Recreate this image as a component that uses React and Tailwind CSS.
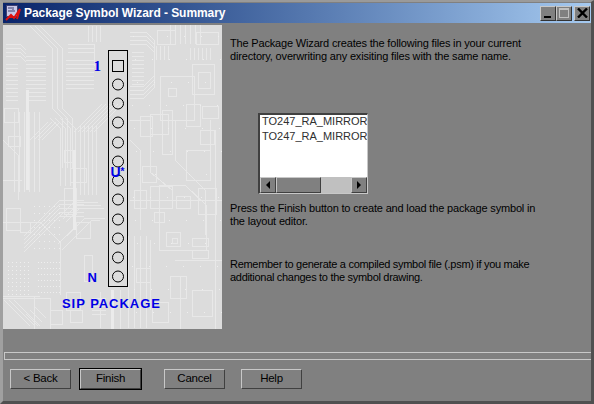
import React from 'react';

const pinRows = [84, 103, 122, 142, 161, 180, 199, 219, 238, 257, 276];

// parallel copper runs: start point, list of [dx, dy] steps, count, pitch
const buses = [
  { x: 6, y: 44, steps: [[14, 0], [6, 6]], n: 4, px: 0, py: 4 },
  { x: 6, y: 64, steps: [[12, 0]], n: 10, px: 0, py: 4 },
  { x: 30, y: 26, steps: [[22, 22], [0, 60], [10, 10], [0, 50]], n: 3, px: 5, py: 0 },
  { x: 26, y: 56, steps: [[20, 0]], n: 12, px: 0, py: 4 },
  { x: 68, y: 44, steps: [[26, 0], [0, 14]], n: 3, px: 0, py: 4 },
  { x: 66, y: 60, steps: [[28, 0]], n: 8, px: 0, py: 4 },
  { x: 74, y: 132, steps: [[28, -28]], n: 6, px: 4, py: 0 },
  { x: 30, y: 140, steps: [[18, -18]], n: 4, px: 4, py: 0 },
  { x: 80, y: 125, steps: [[0, 70]], n: 5, px: 4, py: 0 },
  { x: 14, y: 112, steps: [[0, 80]], n: 6, px: 5, py: 0 },
  { x: 50, y: 118, steps: [[10, 10], [0, 58]], n: 4, px: 5, py: 0 },
  { x: 24, y: 236, steps: [[36, -36], [24, 0]], n: 5, px: 0, py: 4 },
  { x: 60, y: 216, steps: [[14, -14], [24, 0]], n: 3, px: 3, py: 3 },
  { x: 130, y: 32, steps: [[16, 0], [8, 8], [0, 36], [-10, 10], [-14, 0]], n: 4, px: 0, py: 4 },
  { x: 132, y: 52, steps: [[12, 0]], n: 9, px: 0, py: 4 },
  { x: 128, y: 236, steps: [[0, 92]], n: 4, px: 6, py: 0 },
  { x: 88, y: 26, steps: [[0, 16]], n: 4, px: 4, py: 0 },
  { x: 170, y: 24, steps: [[0, 20]], n: 7, px: 5, py: 0 },
  { x: 156, y: 46, steps: [[0, 14]], n: 4, px: 4, py: 0 },
  { x: 190, y: 48, steps: [[0, 12]], n: 6, px: 4, py: 0 },
  { x: 92, y: 298, steps: [[14, 0]], n: 5, px: 0, py: 4 },
  { x: 26, y: 314, steps: [[12, 12]], n: 3, px: 4, py: -4 },
  { x: 4, y: 300, steps: [[26, 26]], n: 3, px: 5, py: 0 },
];

// outlines of the chips and pads on the board
const boxes = [
  [160, 76, 34, 44], [168, 88, 8, 8], [192, 64, 22, 30], [198, 72, 12, 16], [157, 30, 18, 14],
  [196, 32, 22, 12], [150, 114, 18, 20], [162, 110, 10, 44], [140, 116, 12, 20], [186, 104, 14, 22],
  [202, 106, 16, 12], [166, 232, 14, 14], [172, 238, 5, 5], [150, 186, 22, 22], [198, 188, 18, 26],
  [136, 268, 14, 14], [170, 276, 16, 22], [192, 290, 20, 26], [4, 108, 14, 14], [70, 168, 16, 14],
  [64, 188, 12, 26], [76, 222, 14, 16], [66, 292, 14, 18], [50, 310, 12, 14], [84, 255, 8, 26],
  [6, 208, 14, 22], [152, 302, 16, 20], [186, 150, 24, 30], [142, 166, 14, 16], [70, 310, 12, 12],
  [134, 190, 12, 18], [176, 196, 14, 12], [154, 212, 10, 10], [192, 238, 16, 8], [192, 250, 16, 8],
  [20, 222, 10, 10], [64, 150, 10, 12], [8, 136, 12, 10], [200, 130, 14, 14],
];

const wires = [
  'M159 190 L159 250 L206 250 L206 205 L185 185 L159 185 Z',
  'M130 120 L150 120 L150 172 L172 190',
  'M175 120 L175 160 L205 190 L205 235',
  'M3 222 L40 222 L60 242 L60 295',
  'M40 296 L3 296',
  'M34 296 L34 329',
  'M120 290 L120 329',
  'M62 250 L92 220 L100 220',
  'M3 140 L18 155 L18 200',
  'M130 200 L222 200',
  'M210 120 L210 180',
  'M150 240 L150 310',
  'M100 292 L100 328',
  'M175 260 L222 260',
  'M3 180 L22 180',
  'M58 244 L85 218 L105 218',
  'M3 298 L50 298 L50 329',
  'M130 140 L140 150 L140 230',
  'M180 276 L180 329',
  'M215 130 L215 329',
];

// via holes: grids on the lower left, sparse dots elsewhere
const vias = [];
for (let y = 262; y < 296; y += 4) {
  for (let x = 8; x < 32; x += 4) vias.push([x, y]);
}
for (let y = 262; y < 296; y += 6) {
  for (let x = 38; x < 60; x += 3) vias.push([x, y]);
}
for (let y = 206; y < 250; y += 7) {
  for (let x = 34; x < 60; x += 5) vias.push([x, y]);
}
for (let y = 36; y < 325; y += 23) {
  for (let x = 132; x < 222; x += 17) vias.push([x + (y % 7), y]);
}

function busPath(b) {
  let d = '';
  for (let i = 0; i < b.n; i++) {
    let x = b.x + i * b.px;
    let y = b.y + i * b.py;
    d += `M${x} ${y}`;
    b.steps.forEach(([dx, dy]) => {
      x += dx;
      y += dy;
      d += ` L${x} ${y}`;
    });
  }
  return d;
}

function SymbolArt() {
  const blue = '#0000e6';
  return (
    <svg width="219" height="304" viewBox="3 25 219 304" className="block shrink-0">
      <rect x="3" y="25" width="219" height="304" fill="#dcdcdc" />
      <g fill="none" stroke="#e8e8e8" strokeWidth="1" shapeRendering="crispEdges">
        {buses.map((b, i) => (
          <path key={i} d={busPath(b)} />
        ))}
        {boxes.map(([x, y, w, h], i) => (
          <rect key={i} x={x} y={y} width={w} height={h} />
        ))}
        {wires.map((d, i) => (
          <path key={i} d={d} />
        ))}
        <path d="M27 90 L27 190 M74 150 L74 230 M112 290 L112 329" stroke="#ebebeb" strokeWidth="3" />
      </g>
      <g fill="#efefef">
        {vias.map(([x, y], i) => (
          <rect key={i} x={x} y={y} width="1" height="1" />
        ))}
      </g>
      <rect x="108.5" y="50.5" width="19" height="236" fill="none" stroke="#000" />
      <rect x="112.5" y="60.5" width="11" height="11" fill="none" stroke="#000" />
      {pinRows.map((y) => (
        <circle key={y} cx="118" cy={y + 0.5} r="5.5" fill="none" stroke="#000" />
      ))}
      <text x="93.5" y="71" fill={blue} fontFamily="Liberation Serif, serif" fontWeight="700" fontSize="15">1</text>
      <text x="110.5" y="177" fill={blue} fontFamily="Liberation Sans, sans-serif" fontWeight="700" fontSize="14">U</text>
      <text x="120.5" y="175" fill={blue} fontFamily="Liberation Sans, sans-serif" fontWeight="700" fontSize="10">*</text>
      <text x="87.5" y="282" fill={blue} fontFamily="Liberation Sans, sans-serif" fontWeight="700" fontSize="13">N</text>
      <text x="62" y="308" fill={blue} fontFamily="Liberation Sans, sans-serif" fontWeight="700" fontSize="13" letterSpacing="0.95">SIP PACKAGE</text>
    </svg>
  );
}

function TitleButton({ children, className = '' }) {
  return (
    <div className={`w-4 h-[15px] bg-[#808080] border-t border-l border-r border-b border-t-[#c8c8c8] border-l-[#c8c8c8] border-r-[#333] border-b-[#333] flex items-center justify-center ${className}`}>
      {children}
    </div>
  );
}

function WizButton({ children, def }) {
  return (
    <div className={def ? 'border border-black' : 'border border-transparent'}>
      <div className="w-[61px] h-[20px] bg-[#808080] border-t border-l border-r border-b border-t-[#c8c8c8] border-l-[#c8c8c8] border-r-[#404040] border-b-[#404040] flex items-center justify-center text-[11.5px] tracking-[-0.25px] text-black leading-none">
        {children}
      </div>
    </div>
  );
}

export default function App() {
  return (
    <div className="w-[594px] h-[404px] bg-[#808080] flex flex-col border-t-2 border-l-[3px] border-r-[3px] border-b-[3px] border-t-[#9a9a9a] border-l-[#a0a0a0] border-r-[#505050] border-b-[#505050] font-['Liberation_Sans',sans-serif] overflow-hidden">
      <div className="h-[20px] mt-[1px] shrink-0 bg-gradient-to-r from-[#0a246a] to-[#a6caf0] flex items-center pl-[2px] pr-[1px]">
        <svg width="16" height="16" viewBox="0 0 16 16" className="shrink-0">
          <rect x="1.5" y="0.5" width="11" height="11" fill="#c8c8e8" stroke="#404070" />
          <path d="M3 3h4M3 6h7M8 2v3" stroke="#404070" fill="none" />
          <path d="M1 15 L6 10 L9 13 L15 4 L12 14 M3 12h8" stroke="#e01010" strokeWidth="2" fill="none" />
        </svg>
        <span className="ml-[3px] text-white font-bold text-[12px] tracking-[-0.06px] whitespace-nowrap">
          Package Symbol Wizard - Summary
        </span>
        <div className="ml-auto flex items-center">
          <TitleButton>
            <div className="w-[7px] h-[2px] bg-black mt-[7px] mr-[1px]" />
          </TitleButton>
          <TitleButton className="mr-[2px]">
            <div className="w-[10px] h-[10px] border border-[#c0c0c0] border-t-2" />
          </TitleButton>
          <TitleButton>
            <svg width="11" height="10" viewBox="0 0 11 10">
              <path d="M1 0.5 L10 9.5 M10 0.5 L1 9.5" stroke="#000" strokeWidth="2.4" fill="none" />
            </svg>
          </TitleButton>
        </div>
      </div>
      <div className="flex h-[304px] mt-[2px] shrink-0">
        <SymbolArt />
        <div className="pl-[8px] pt-[12px] w-[360px] text-[11px] tracking-[-0.17px] leading-[13px] text-black">
          <p className="whitespace-pre-line">
            {'The Package Wizard creates the following files in your current\ndirectory, overwriting any exisiting files with the same name.'}
          </p>
          <div className="ml-[28px] mt-[50px] w-[110px] h-[81px] bg-white border-t-2 border-l-2 border-b border-r border-t-[#404040] border-l-[#404040] border-b-[#c8c8c8] border-r-[#c8c8c8] flex flex-col overflow-hidden">
            <div className="flex-1 pl-[2px] -mt-[1px] text-[11px] tracking-[0] leading-[15px] text-[#303030] whitespace-nowrap overflow-hidden">
              <div>TO247_RA_MIRROR</div>
              <div>TO247_RA_MIRROR</div>
            </div>
            <div className="h-[16px] flex bg-[#c0c0c0]">
              <div className="w-4 bg-[#808080] border border-t-[#c8c8c8] border-l-[#c8c8c8] border-r-[#404040] border-b-[#404040] flex items-center justify-center">
                <div className="w-0 h-0 border-y-[4px] border-y-transparent border-r-[4px] border-r-black" />
              </div>
              <div className="w-[45px] bg-[#808080] border border-t-[#c8c8c8] border-l-[#c8c8c8] border-r-[#404040] border-b-[#404040]" />
              <div className="flex-1" />
              <div className="w-4 bg-[#808080] border border-t-[#c8c8c8] border-l-[#c8c8c8] border-r-[#404040] border-b-[#404040] flex items-center justify-center">
                <div className="w-0 h-0 border-y-[4px] border-y-transparent border-l-[4px] border-l-black" />
              </div>
            </div>
          </div>
          <p className="mt-[8px] whitespace-pre-line">
            {'Press the Finish button to create and load the package symbol in\nthe layout editor.'}
          </p>
          <p className="mt-[30px] whitespace-pre-line tracking-[-0.3px]">
            {'Remember to generate a compiled symbol file (.psm) if you make\nadditional changes to the symbol drawing.'}
          </p>
        </div>
      </div>
      <div className="ml-[1px] mt-[23px] h-[8px] shrink-0 border-t border-b border-t-[#c8c8c8] border-b-[#c8c8c8] border-l border-l-[#c8c8c8]" />
      <div className="flex pl-[6px] mt-[8px]">
        <WizButton>&lt; Back</WizButton>
        <div className="w-[7px]" />
        <WizButton def>Finish</WizButton>
        <div className="w-[21px]" />
        <WizButton>Cancel</WizButton>
        <div className="w-[14px]" />
        <WizButton>Help</WizButton>
      </div>
    </div>
  );
}
